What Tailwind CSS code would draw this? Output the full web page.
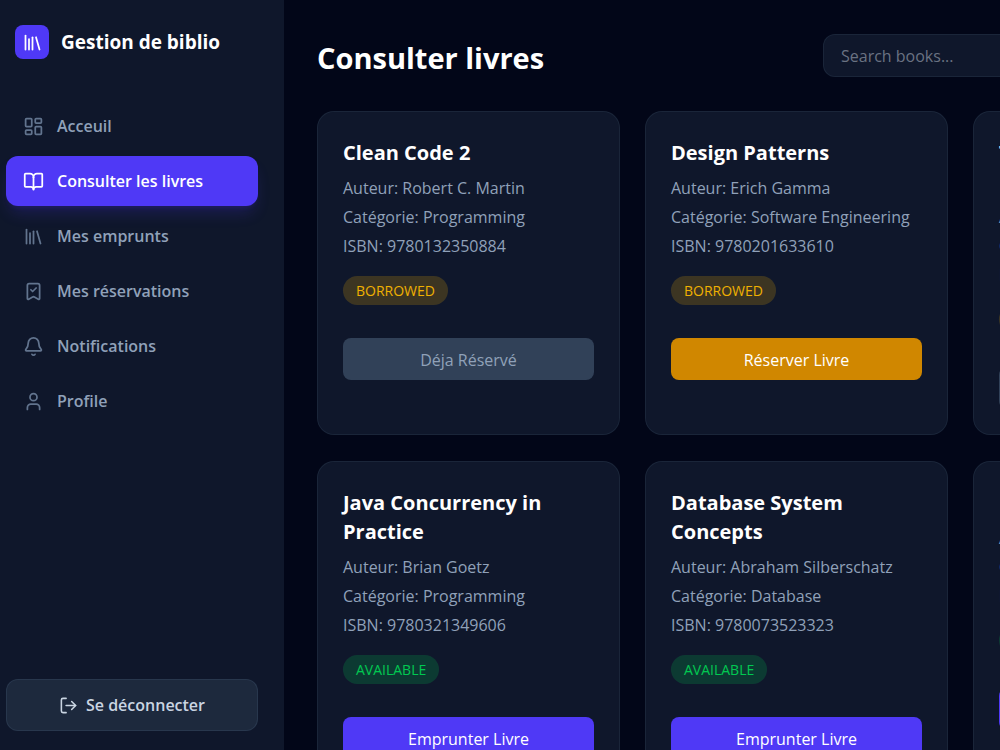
<!DOCTYPE html>
<html lang="fr">
<head>
  <meta charset="UTF-8" />
  <meta name="viewport" content="width=device-width, initial-scale=1.0"/>
  <title>Gestion de biblio</title>
  <script src="https://cdn.jsdelivr.net/npm/@tailwindcss/browser@4"></script>
</head>
<body class="h-screen overflow-hidden bg-slate-950 text-white font-['Open_Sans','Noto_Sans',sans-serif] text-[16px] leading-[25px] flex">

  <!-- Sidebar -->
  <aside class="w-[284px] shrink-0 h-full bg-slate-900 flex flex-col pl-[6px] pr-[26px] pt-[25px] pb-[19px]">
    <div class="flex items-center gap-3 pl-[9px]">
      <div class="size-[34px] rounded-lg bg-indigo-600 flex items-center justify-center">
        <svg class="size-[21px]" viewBox="0 0 24 24" fill="none" stroke="currentColor" stroke-width="2" stroke-linecap="round" stroke-linejoin="round"><path d="m16 6 4 14"/><path d="M12 6v14"/><path d="M8 8v12"/><path d="M4 4v16"/></svg>
      </div>
      <span class="text-[19px] font-bold whitespace-nowrap">Gestion de biblio</span>
    </div>

    <nav class="mt-[42px] flex flex-col gap-[5px] font-semibold text-slate-400">
      <a href="#" class="h-[50px] px-[17px] flex items-center gap-[13px] rounded-xl hover:bg-slate-800">
        <svg class="size-[21px] text-slate-500" viewBox="0 0 24 24" fill="none" stroke="currentColor" stroke-width="2" stroke-linecap="round" stroke-linejoin="round"><rect width="7" height="9" x="3" y="3" rx="1"/><rect width="7" height="5" x="14" y="3" rx="1"/><rect width="7" height="9" x="14" y="12" rx="1"/><rect width="7" height="5" x="3" y="16" rx="1"/></svg>
        Acceuil
      </a>
      <a href="#" class="h-[50px] px-[17px] flex items-center gap-[13px] rounded-xl bg-indigo-600 text-white shadow-lg shadow-indigo-600/20">
        <svg class="size-[21px]" viewBox="0 0 24 24" fill="none" stroke="currentColor" stroke-width="2" stroke-linecap="round" stroke-linejoin="round"><path d="M12 7v14"/><path d="M3 18a1 1 0 0 1-1-1V4a1 1 0 0 1 1-1h5a4 4 0 0 1 4 4 4 4 0 0 1 4-4h5a1 1 0 0 1 1 1v13a1 1 0 0 1-1 1h-6a3 3 0 0 0-3 3 3 3 0 0 0-3-3z"/></svg>
        Consulter les livres
      </a>
      <a href="#" class="h-[50px] px-[17px] flex items-center gap-[13px] rounded-xl hover:bg-slate-800">
        <svg class="size-[21px] text-slate-500" viewBox="0 0 24 24" fill="none" stroke="currentColor" stroke-width="2" stroke-linecap="round" stroke-linejoin="round"><path d="m16 6 4 14"/><path d="M12 6v14"/><path d="M8 8v12"/><path d="M4 4v16"/></svg>
        Mes emprunts
      </a>
      <a href="#" class="h-[50px] px-[17px] flex items-center gap-[13px] rounded-xl hover:bg-slate-800">
        <svg class="size-[21px] text-slate-500" viewBox="0 0 24 24" fill="none" stroke="currentColor" stroke-width="2" stroke-linecap="round" stroke-linejoin="round"><path d="M17 3a2 2 0 0 1 2 2v15a1 1 0 0 1-1.496.868l-4.512-2.578a2 2 0 0 0-1.984 0l-4.512 2.578A1 1 0 0 1 5 20V5a2 2 0 0 1 2-2z"/><path d="m9 10 2 2 4-4"/></svg>
        Mes réservations
      </a>
      <a href="#" class="h-[50px] px-[17px] flex items-center gap-[13px] rounded-xl hover:bg-slate-800">
        <svg class="size-[21px] text-slate-500" viewBox="0 0 24 24" fill="none" stroke="currentColor" stroke-width="2" stroke-linecap="round" stroke-linejoin="round"><path d="M10.268 21a2 2 0 0 0 3.464 0"/><path d="M3.262 15.326A1 1 0 0 0 4 17h16a1 1 0 0 0 .74-1.673C19.41 13.956 18 12.499 18 8A6 6 0 0 0 6 8c0 4.499-1.411 5.956-2.738 7.326"/></svg>
        Notifications
      </a>
      <a href="#" class="h-[50px] px-[17px] flex items-center gap-[13px] rounded-xl hover:bg-slate-800">
        <svg class="size-[21px] text-slate-500" viewBox="0 0 24 24" fill="none" stroke="currentColor" stroke-width="2" stroke-linecap="round" stroke-linejoin="round"><path d="M19 21v-2a4 4 0 0 0-4-4H9a4 4 0 0 0-4 4v2"/><circle cx="12" cy="7" r="4"/></svg>
        Profile
      </a>
    </nav>

    <button class="mt-auto h-[52px] w-full flex items-center justify-center gap-2 rounded-xl border border-slate-700/60 bg-slate-800 font-semibold text-slate-300">
      <svg class="size-[19px]" viewBox="0 0 24 24" fill="none" stroke="currentColor" stroke-width="2" stroke-linecap="round" stroke-linejoin="round"><path d="m16 17 5-5-5-5"/><path d="M21 12H9"/><path d="M9 21H5a2 2 0 0 1-2-2V5a2 2 0 0 1 2-2h4"/></svg>
      Se déconnecter
    </button>
  </aside>

  <!-- Main content, clipped on narrow windows -->
  <main class="flex-1 min-w-0 overflow-hidden px-[33px] pt-[34px]">
    <header class="w-[959px] flex items-center justify-between mb-[34px]">
      <h1 class="text-[29px] leading-[43px] pt-[2px] -mb-[2px] font-bold">Consulter livres</h1>
      <input type="text" aria-label="Search books" placeholder="Search books..." class="w-[453px] h-[43px] px-[17px] rounded-xl border border-slate-800/80 bg-slate-900 placeholder:text-gray-500 focus:outline-none focus:border-indigo-600">
    </header>

    <div class="grid grid-cols-[repeat(3,303px)] gap-x-[25px] gap-y-[26px] text-slate-400">
      <article class="rounded-[17px] border border-slate-800/80 bg-slate-900 px-[25px] pt-[26px] pb-[25px]">
        <h2 class="text-[20px] leading-[29px] font-bold text-white">Clean Code 2</h2>
        <div class="mt-[9px] space-y-[4px]">
          <p>Auteur: Robert C. Martin</p>
          <p>Catégorie: Programming</p>
          <p>ISBN: 9780132350884</p>
        </div>
        <span class="mt-[17px] block w-fit px-[13px] py-1 rounded-full bg-yellow-500/20 text-yellow-500 text-[14px] leading-[21px]">BORROWED</span>
        <button disabled class="mt-[33px] h-[42px] w-full pt-[2px] rounded-lg bg-slate-700 text-slate-400">Déja Réservé</button>
      </article>

      <article class="rounded-[17px] border border-slate-800/80 bg-slate-900 px-[25px] pt-[26px] pb-[25px]">
        <h2 class="text-[20px] leading-[29px] font-bold text-white">Design Patterns</h2>
        <div class="mt-[9px] space-y-[4px]">
          <p>Auteur: Erich Gamma</p>
          <p>Catégorie: Software Engineering</p>
          <p>ISBN: 9780201633610</p>
        </div>
        <span class="mt-[17px] block w-fit px-[13px] py-1 rounded-full bg-yellow-500/20 text-yellow-500 text-[14px] leading-[21px]">BORROWED</span>
        <button class="mt-[33px] h-[42px] w-full pt-[2px] rounded-lg bg-yellow-600 text-white">Réserver Livre</button>
      </article>

      <article class="rounded-[17px] border border-slate-800/80 bg-slate-900 px-[25px] pt-[26px] pb-[25px]">
        <h2 class="text-[20px] leading-[29px] font-bold text-white">The Pragmatic Programmer</h2>
        <div class="mt-[9px] space-y-[4px]">
          <p>Auteur: Andrew Hunt</p>
          <p>Catégorie: Programming</p>
          <p>ISBN: 9780201616224</p>
        </div>
        <span class="mt-[17px] block w-fit px-[13px] py-1 rounded-full bg-yellow-500/20 text-yellow-500 text-[14px] leading-[21px]">BORROWED</span>
        <button disabled class="mt-[33px] h-[42px] w-full pt-[2px] rounded-lg bg-slate-700 text-slate-400">Déja Réservé</button>
      </article>

      <article class="rounded-[17px] border border-slate-800/80 bg-slate-900 px-[25px] pt-[26px] pb-[25px]">
        <h2 class="text-[20px] leading-[29px] font-bold text-white">Java Concurrency in Practice</h2>
        <div class="mt-[9px] space-y-[4px]">
          <p>Auteur: Brian Goetz</p>
          <p>Catégorie: Programming</p>
          <p>ISBN: 9780321349606</p>
        </div>
        <span class="mt-[17px] block w-fit px-[13px] py-1 rounded-full bg-green-500/20 text-green-500 text-[14px] leading-[21px]">AVAILABLE</span>
        <button class="mt-[33px] h-[42px] w-full pt-[2px] rounded-lg bg-indigo-600 text-white">Emprunter Livre</button>
      </article>

      <article class="rounded-[17px] border border-slate-800/80 bg-slate-900 px-[25px] pt-[26px] pb-[25px]">
        <h2 class="text-[20px] leading-[29px] font-bold text-white">Database System Concepts</h2>
        <div class="mt-[9px] space-y-[4px]">
          <p>Auteur: Abraham Silberschatz</p>
          <p>Catégorie: Database</p>
          <p>ISBN: 9780073523323</p>
        </div>
        <span class="mt-[17px] block w-fit px-[13px] py-1 rounded-full bg-green-500/20 text-green-500 text-[14px] leading-[21px]">AVAILABLE</span>
        <button class="mt-[33px] h-[42px] w-full pt-[2px] rounded-lg bg-indigo-600 text-white">Emprunter Livre</button>
      </article>

      <article class="rounded-[17px] border border-slate-800/80 bg-slate-900 px-[25px] pt-[26px] pb-[25px]">
        <h2 class="text-[20px] leading-[29px] font-bold text-white">Effective Java</h2>
        <div class="mt-[9px] space-y-[4px]">
          <p>Auteur: Joshua Bloch</p>
          <p>Catégorie: Programming</p>
          <p>ISBN: 9780134685991</p>
        </div>
        <span class="mt-[17px] block w-fit px-[13px] py-1 rounded-full bg-green-500/20 text-green-500 text-[14px] leading-[21px]">AVAILABLE</span>
        <button class="mt-[33px] h-[42px] w-full pt-[2px] rounded-lg bg-indigo-600 text-white">Emprunter Livre</button>
      </article>
    </div>
  </main>

</body>
</html>
